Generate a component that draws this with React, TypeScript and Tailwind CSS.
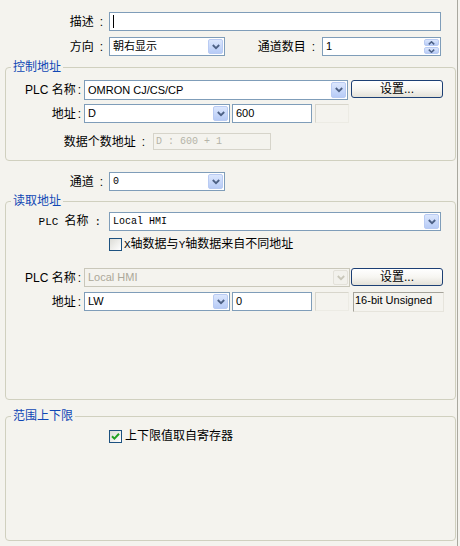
import React from "react";

const Chevron = ({ disabled }: { disabled?: boolean }) => (
  <svg width="8" height="6" viewBox="0 0 8 6">
    <path
      d="M0.8 1 L4 4.2 L7.2 1"
      fill="none"
      stroke={disabled ? "#c9c7ba" : "#4d6185"}
      strokeWidth="1.8"
    />
  </svg>
);

function Select({
  w,
  value,
  disabled,
  mono,
}: {
  w: string;
  value: string;
  disabled?: boolean;
  mono?: boolean;
}) {
  return (
    <div
      className={`flex ${w} h-[19px] border ${
        disabled ? "border-[#c9c7ba] bg-[#f4f3ee]" : "border-[#7f9db9] bg-white"
      }`}
    >
      <div
        className={`flex-1 flex items-center pl-[3px] overflow-hidden whitespace-nowrap ${
          disabled ? "text-[#aca899]" : "text-black"
        } ${
          mono
            ? "font-['Liberation_Mono','Noto_Sans_CJK_SC',monospace] text-[10px]"
            : "text-[11px]"
        }`}
      >
        {value}
      </div>
      <div
        className={`m-[1px] w-[15px] rounded-[2px] flex items-center justify-center ${
          disabled
            ? "bg-[#f2f1ec] border border-[#e3e1d9]"
            : "bg-linear-to-b from-[#dce7fd] to-[#b7cbf6] border border-[#b9cbf3]"
        }`}
      >
        <Chevron disabled={disabled} />
      </div>
    </div>
  );
}

function Input({ w, value, cursor }: { w: string; value?: string; cursor?: boolean }) {
  return (
    <div
      className={`flex items-center ${w} h-[19px] border border-[#7f9db9] bg-white pl-[3px] text-[11px]`}
    >
      {cursor && <div className="w-[1px] h-[13px] bg-black" />}
      {value}
    </div>
  );
}

function DisabledBox({ w }: { w: string }) {
  return (
    <div
      className={`${w} h-[19px] border border-t-[#d8d6cc] border-l-[#d8d6cc] border-r-[#ecebe4] border-b-[#ecebe4]`}
    />
  );
}

function XPButton() {
  return (
    <button className="w-[92px] h-[18px] rounded-[3px] border border-[#1c3f74] bg-linear-to-b from-white via-[#f7f6f2] to-[#e3e1d8] flex items-center justify-center text-[12px] leading-[14px] text-black">
      设置...
    </button>
  );
}

function Checkbox({ checked }: { checked?: boolean }) {
  return (
    <div className="w-[13px] h-[13px] border border-[#1c5180] bg-linear-to-br from-[#dcdcd6] to-white flex items-center justify-center shrink-0">
      {checked && (
        <svg width="9" height="9" viewBox="0 0 9 9">
          <path d="M1 4.2 L3.4 6.6 L8 1.8" fill="none" stroke="#21a121" strokeWidth="2" />
        </svg>
      )}
    </div>
  );
}

function Label({ w, text, pr }: { w: string; text: string; pr: string }) {
  return (
    <div className={`${w} ${pr} flex justify-end items-center text-[12px] leading-[14px] text-black`}>
      <span>{text}</span>
      <span className="ml-[6px]">:</span>
    </div>
  );
}

function Legend({ text }: { text: string }) {
  return (
    <legend className="ml-[5px] px-[2px] text-[12px] leading-[14px] text-[#0f47b5]">{text}</legend>
  );
}

export default function App() {
  return (
    <div className="w-[460px] h-[546px] bg-[#f4f3ee] font-['Liberation_Sans','Noto_Sans_CJK_SC',sans-serif] text-black flex">
      <div className="w-[458px] h-full border-r border-[#a9a89f] flex flex-col pt-[12px]">
        {/* 描述 */}
        <div className="flex h-[19px]">
          <Label w="w-[109px]" pr="pr-[6px]" text="描述" />
          <Input w="w-[332px]" cursor />
        </div>
        {/* 方向 / 通道数目 */}
        <div className="flex h-[19px] mt-[6px]">
          <Label w="w-[109px]" pr="pr-[6px]" text="方向" />
          <Select w="w-[116px]" value="朝右显示" />
          <Label w="w-[97px]" pr="pr-[7px]" text="通道数目" />
          <div className="flex w-[119px] h-[19px] border border-[#7f9db9] bg-white">
            <div className="flex-1 flex items-center pl-[3px] text-[11px]">1</div>
            <div className="m-[1px] w-[15px] flex flex-col gap-[1px]">
              <div className="flex-1 rounded-[2px] bg-linear-to-b from-[#dce7fd] to-[#b7cbf6] border border-[#b9cbf3] flex items-center justify-center">
                <svg width="7" height="4" viewBox="0 0 7 4">
                  <path d="M0.8 3.4 L3.5 0.8 L6.2 3.4" fill="none" stroke="#4d6185" strokeWidth="1.5" />
                </svg>
              </div>
              <div className="flex-1 rounded-[2px] bg-linear-to-b from-[#dce7fd] to-[#b7cbf6] border border-[#b9cbf3] flex items-center justify-center">
                <svg width="7" height="4" viewBox="0 0 7 4">
                  <path d="M0.8 0.6 L3.5 3.2 L6.2 0.6" fill="none" stroke="#4d6185" strokeWidth="1.5" />
                </svg>
              </div>
            </div>
          </div>
        </div>

        {/* 控制地址 */}
        <fieldset className="ml-[5px] mt-[4px] w-[451px] border border-[#d0d0bf] rounded-[4px] pt-[6px] pb-[10px]">
          <Legend text="控制地址" />
          <div className="flex items-start h-[20px]">
            <div className="w-[78px] pr-[3px] flex justify-end items-center h-[20px] text-[12px] leading-[14px]">
              <span>PLC 名称</span>
              <span className="ml-[2px]">:</span>
            </div>
            <Select w="w-[264px] h-[20px]" value="OMRON CJ/CS/CP" />
            <div className="ml-[3px]">
              <XPButton />
            </div>
          </div>
          <div className="flex mt-[4px]">
            <div className="w-[78px] pr-[3px] flex justify-end items-center h-[19px] text-[12px] leading-[14px]">
              <span>地址</span>
              <span className="ml-[2px]">:</span>
            </div>
            <Select w="w-[146px]" value="D" />
            <div className="ml-[2px]">
              <Input w="w-[80px]" value="600" />
            </div>
            <div className="ml-[3px]">
              <DisabledBox w="w-[34px]" />
            </div>
          </div>
          <div className="flex mt-[10px]">
            <Label w="w-[147px]" pr="pr-[8px]" text="数据个数地址" />
            <div className="w-[118px] h-[17px] border border-[#d6d4ca] flex items-center pl-[2px] font-['Liberation_Mono',monospace] text-[10px] text-[#b5b3a8]">
              D : 600 + 1
            </div>
          </div>
        </fieldset>

        {/* 通道 */}
        <div className="flex h-[19px] mt-[11px]">
          <Label w="w-[109px]" pr="pr-[6px]" text="通道" />
          <Select w="w-[116px]" value="0" mono />
        </div>

        {/* 读取地址 */}
        <fieldset className="ml-[5px] mt-[3px] w-[451px] border border-[#d0d0bf] rounded-[4px] pt-[4px] pb-[87px]">
          <Legend text="读取地址" />
          <div className="flex">
            <div className="w-[103px] pr-[8px] flex justify-end items-center h-[19px] text-[12px] leading-[14px] font-['Liberation_Mono','Noto_Sans_CJK_SC',monospace]">
              <span className="text-[11px]">PLC</span>
              <span className="ml-[6px]">名称</span>
              <span className="ml-[6px] text-[11px]">:</span>
            </div>
            <Select w="w-[332px]" value="Local HMI" mono />
          </div>
          <div className="flex items-center mt-[6px] pl-[103px] h-[14px]">
            <Checkbox />
            <span className="ml-[2px] text-[12px] leading-[14px] text-black">
              <span className="font-['Liberation_Mono',monospace] text-[11px]">X</span>
              轴数据与
              <span className="font-['Liberation_Mono',monospace] text-[11px]">Y</span>
              轴数据来自不同地址
            </span>
          </div>
          <div className="flex mt-[17px]">
            <div className="w-[78px] pr-[3px] flex justify-end items-center h-[19px] text-[12px] leading-[14px]">
              <span>PLC 名称</span>
              <span className="ml-[2px]">:</span>
            </div>
            <Select w="w-[266px]" value="Local HMI" disabled />
            <div className="ml-[1px]">
              <XPButton />
            </div>
          </div>
          <div className="flex mt-[5px]">
            <div className="w-[78px] pr-[3px] flex justify-end items-center h-[19px] text-[12px] leading-[14px]">
              <span>地址</span>
              <span className="ml-[2px]">:</span>
            </div>
            <Select w="w-[146px]" value="LW" />
            <div className="ml-[2px]">
              <Input w="w-[80px]" value="0" />
            </div>
            <div className="ml-[3px]">
              <DisabledBox w="w-[34px]" />
            </div>
            <div className="ml-[4px] w-[91px] h-[20px] border border-t-[#a5a39a] border-l-[#a5a39a] border-r-[#e6e4dc] border-b-[#e6e4dc] pl-[1px] text-[11px] leading-[14px]">
              16-bit Unsigned
            </div>
          </div>
        </fieldset>

        {/* 范围上下限 */}
        <fieldset className="ml-[5px] mt-[9px] w-[451px] h-[132px] border border-[#d0d0bf] rounded-[4px] pt-[6px]">
          <Legend text="范围上下限" />
          <div className="flex items-center pl-[103px] h-[14px]">
            <Checkbox checked />
            <span className="ml-[3px] text-[12px] leading-[14px]">上下限值取自寄存器</span>
          </div>
        </fieldset>
      </div>
    </div>
  );
}
